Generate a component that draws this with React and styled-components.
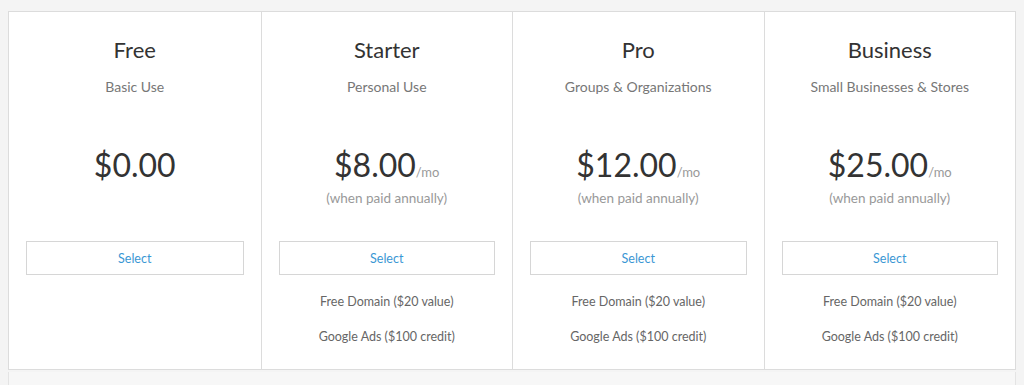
import React from "react";
import styled, { createGlobalStyle } from "styled-components";

const GlobalStyle = createGlobalStyle`
  body {
    margin: 0;
    background: #f4f4f4;
    font-family: Lato, "Open Sans", Arial, sans-serif;
  }
`;

const Page = styled.div`
  padding: 11px 8px 0;
`;

const Plans = styled.div`
  display: grid;
  grid-template-columns: repeat(4, 1fr);
  background: #fff;
  border: 1px solid #dcdcdc;
  height: 359px;
  box-sizing: border-box;
`;

const Plan = styled.div`
  display: flex;
  flex-direction: column;
  align-items: center;
  border-left: ${(p) => (p.first ? "none" : "1px solid #dcdcdc")};
  padding: 0 17px;
`;

const Name = styled.h2`
  margin: 24px 0 0;
  font-size: 22px;
  font-weight: 400;
  color: #333;
  line-height: 28px;
`;

const Tagline = styled.div`
  margin-top: 14px;
  font-size: 14px;
  color: #777;
  line-height: 18px;
`;

const Price = styled.div`
  margin-top: 49px;
  font-size: 32px;
  color: #333;
  line-height: 40px;
  display: flex;
  align-items: flex-end;
`;

const Per = styled.span`
  font-size: 13px;
  color: #999;
  line-height: 18px;
  margin-bottom: 4px;
`;

const Note = styled.div`
  margin-top: 4px;
  height: 18px;
  font-size: 13.5px;
  color: #999;
  line-height: 18px;
`;

const SelectButton = styled.button`
  margin-top: 34px;
  width: 100%;
  height: 34px;
  background: #fff;
  border: 1px solid #d6d6d6;
  color: #3a97d4;
  font-family: inherit;
  font-size: 12.5px;
  cursor: pointer;
`;

const Features = styled.ul`
  list-style: none;
  margin: 18px 0 0;
  padding: 0;
  display: flex;
  flex-direction: column;
  gap: 17px;
  align-items: center;
`;

const Feature = styled.li`
  font-size: 12.5px;
  color: #666;
  line-height: 18px;
`;

const Footer = styled.div`
  margin-top: 2px;
  height: 20px;
  background: #f7f7f7;
  border-left: 1px solid #e4e4e4;
  border-right: 1px solid #e4e4e4;
`;

const plans = [
  { name: "Free", tagline: "Basic Use", price: "$0.00", monthly: false, features: [] },
  {
    name: "Starter",
    tagline: "Personal Use",
    price: "$8.00",
    monthly: true,
    features: ["Free Domain ($20 value)", "Google Ads ($100 credit)"],
  },
  {
    name: "Pro",
    tagline: "Groups & Organizations",
    price: "$12.00",
    monthly: true,
    features: ["Free Domain ($20 value)", "Google Ads ($100 credit)"],
  },
  {
    name: "Business",
    tagline: "Small Businesses & Stores",
    price: "$25.00",
    monthly: true,
    features: ["Free Domain ($20 value)", "Google Ads ($100 credit)"],
  },
];

export default function App() {
  return (
    <Page>
      <GlobalStyle />
      <Plans>
        {plans.map((plan, i) => (
          <Plan key={plan.name} first={i === 0}>
            <Name>{plan.name}</Name>
            <Tagline>{plan.tagline}</Tagline>
            <Price>
              {plan.price}
              {plan.monthly && <Per>/mo</Per>}
            </Price>
            <Note>{plan.monthly ? "(when paid annually)" : ""}</Note>
            <SelectButton>Select</SelectButton>
            <Features>
              {plan.features.map((f) => (
                <Feature key={f}>{f}</Feature>
              ))}
            </Features>
          </Plan>
        ))}
      </Plans>
      <Footer />
    </Page>
  );
}
